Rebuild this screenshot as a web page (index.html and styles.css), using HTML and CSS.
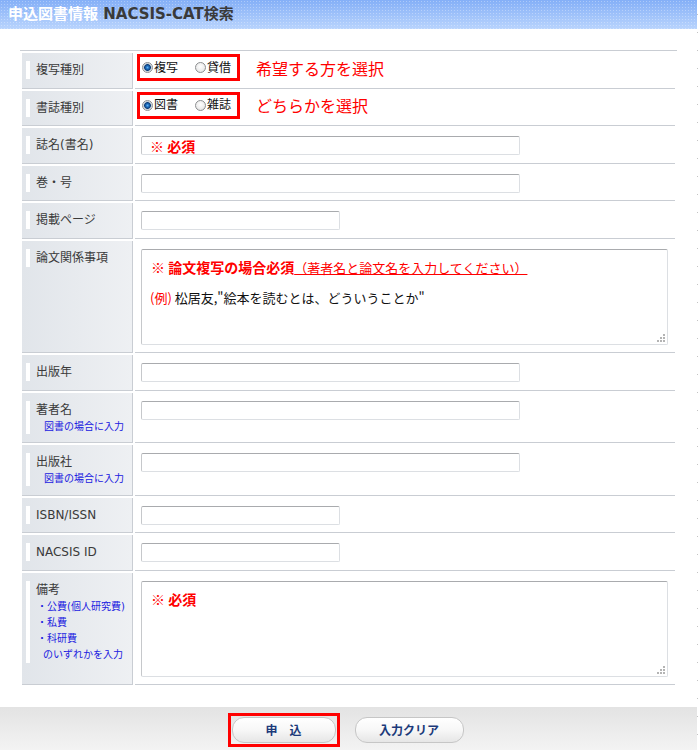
FILE: index.html
```html
<!DOCTYPE html>
<html lang="ja">

<head>
	<meta charset="utf-8">
	<title>
		申込図書情報 NACSIS-CAT検索
	</title>

	<link rel="stylesheet" href="styles.css">

</head>

<body>
	<div class="page">
		<h1 class="head"><span class="head-main">申込図書情報</span> NACSIS-CAT検索</h1>

		<table class="form">
			<tr>
				<th><div class="label">複写種別</div></th>
				<td class="choice">
					<div class="choice-row">
						<span class="mark">
							<label><input class="radio" type="radio" name="copy" checked>複写</label>
							<label><input class="radio" type="radio" name="copy">貸借</label>
						</span>
						<span class="pick">希望する方を選択</span>
					</div>
				</td>
			</tr>
			<tr>
				<th><div class="label">書誌種別</div></th>
				<td class="choice">
					<div class="choice-row">
						<span class="mark">
							<label><input class="radio" type="radio" name="kind" checked>図書</label>
							<label><input class="radio" type="radio" name="kind">雑誌</label>
						</span>
						<span class="pick">どちらかを選択</span>
					</div>
				</td>
			</tr>
			<tr>
				<th><div class="label">誌名(書名)</div></th>
				<td><input class="text" type="text" placeholder="※ 必須"></td>
			</tr>
			<tr>
				<th><div class="label">巻・号</div></th>
				<td><input class="text" type="text"></td>
			</tr>
			<tr>
				<th><div class="label">掲載ページ</div></th>
				<td><input class="text short" type="text"></td>
			</tr>
			<tr class="tall">
				<th><div class="label">論文関係事項</div></th>
				<td>
					<div class="area">
						<div class="req">※ 論文複写の場合必須<span class="req-sub">（著者名と論文名を入力してください）</span></div>
						<div class="sample"><span class="sample-tag">(例)</span> 松居友,"絵本を読むとは、どういうことか"</div>
						<svg class="grip" width="8" height="8" viewBox="0 0 8 8">
							<rect x="6" y="0" width="2" height="2" fill="#b4b4b4"/>
							<rect x="3" y="3" width="2" height="2" fill="#b4b4b4"/>
							<rect x="6" y="3" width="2" height="2" fill="#b4b4b4"/>
							<rect x="0" y="6" width="2" height="2" fill="#b4b4b4"/>
							<rect x="3" y="6" width="2" height="2" fill="#b4b4b4"/>
							<rect x="6" y="6" width="2" height="2" fill="#b4b4b4"/>
						</svg>
					</div>
				</td>
			</tr>
			<tr>
				<th><div class="label">出版年</div></th>
				<td><input class="text" type="text"></td>
			</tr>
			<tr class="mid">
				<th><div class="label">著者名<div class="hint">図書の場合に入力</div></div></th>
				<td><input class="text" type="text"></td>
			</tr>
			<tr class="mid">
				<th><div class="label">出版社<div class="hint">図書の場合に入力</div></div></th>
				<td><input class="text" type="text"></td>
			</tr>
			<tr>
				<th><div class="label">ISBN/ISSN</div></th>
				<td><input class="text short" type="text"></td>
			</tr>
			<tr>
				<th><div class="label">NACSIS ID</div></th>
				<td><input class="text short" type="text"></td>
			</tr>
			<tr class="tall">
				<th>
					<div class="label">備考
						<ul class="fund">
							<li>・公費(個人研究費)</li>
							<li>・私費</li>
							<li>・科研費</li>
							<li class="fund-tail">のいずれかを入力</li>
						</ul>
					</div>
				</th>
				<td>
					<div class="area">
						<div class="req">※ 必須</div>
						<svg class="grip" width="8" height="8" viewBox="0 0 8 8">
							<rect x="6" y="0" width="2" height="2" fill="#b4b4b4"/>
							<rect x="3" y="3" width="2" height="2" fill="#b4b4b4"/>
							<rect x="6" y="3" width="2" height="2" fill="#b4b4b4"/>
							<rect x="0" y="6" width="2" height="2" fill="#b4b4b4"/>
							<rect x="3" y="6" width="2" height="2" fill="#b4b4b4"/>
							<rect x="6" y="6" width="2" height="2" fill="#b4b4b4"/>
						</svg>
					</div>
				</td>
			</tr>
		</table>

		<div class="foot">
			<span class="mark btn-mark"><button class="btn">申　込</button></span>
			<button class="btn wide">入力クリア</button>
		</div>
	</div>
</body>

</html>
```

FILE: styles.css
```css
body {
	margin: 0;
	font-family: "DejaVu Sans", "Noto Sans CJK JP", sans-serif;
	font-size: 12px;
	color: #333;
	background: #fff;
}

.page {
	width: 698px;
	min-height: 750px;
	background-image: linear-gradient(#c4c4c4 0 1px, transparent 1px);
	background-size: 1px 18px;
	background-position: 697px 14px;
	background-repeat: repeat-y;
}

.head {
	margin: 0;
	width: 697px;
	height: 29px;
	box-sizing: border-box;
	padding-left: 8px;
	line-height: 29px;
	font-size: 15px;
	font-weight: bold;
	color: #3a3a3a;
	background:
		radial-gradient(circle, rgba(255, 255, 255, 0.3) 0.7px, transparent 1px) 0 0 / 3px 3px,
		linear-gradient(#84aff7, #b9d4fd);
}

.head-main {
	color: #fff;
}

/* form table */

.form {
	margin: 21px 0 0 20px;
	width: 657px;
	table-layout: fixed;
	border-top: 1px solid #c9cdd3;
	border-spacing: 2px;
}

.form tr {
	height: 35.5px;
}

.form tr.mid {
	height: 50.5px;
}

.form tr.tall {
	height: 112.5px;
}

.form th {
	width: 111px;
	box-sizing: border-box;
	padding: 8px 0 0 4px;
	vertical-align: top;
	text-align: left;
	font-weight: normal;
	background: linear-gradient(to right, #e1e5ea, #eef0f3);
	border-right: 1px solid #c9cdd3;
	border-bottom: 1px solid #c9cdd3;
}

.form td {
	padding: 8px 0 0 6px;
	vertical-align: top;
	border-bottom: 1px solid #c9cdd3;
}

.form td.choice {
	padding: 1px 0 0 2px;
}

.label {
	border-left: 4px solid #fff;
	padding-left: 6px;
	line-height: 18px;
	color: #3a3a3a;
}

.hint {
	margin-left: 8px;
	font-size: 10px;
	line-height: 15px;
	color: #2020e0;
}

.fund {
	margin: 0;
	padding: 0 0 0 1px;
	list-style: none;
	font-size: 10px;
	line-height: 16px;
	color: #2020e0;
}

.fund-tail {
	padding-left: 6px;
}

/* radio choices */

.choice-row {
	display: flex;
	align-items: center;
}

.mark {
	display: inline-flex;
	align-items: center;
	box-sizing: border-box;
	height: 27px;
	padding: 0 6px 0 2px;
	border: 3px solid #f00;
	color: #111;
}

.mark label {
	display: flex;
	align-items: center;
	line-height: 18px;
}

.mark label + label {
	margin-left: 17px;
}

.radio {
	appearance: none;
	-webkit-appearance: none;
	box-sizing: border-box;
	width: 11px;
	height: 11px;
	margin: 0 1px 0 0;
	border: 1px solid #8d8f91;
	border-radius: 50%;
	background: radial-gradient(circle at 50% 40%, #fff 0, #ececec 60%, #d2d2d2 100%);
}

.radio:checked {
	background: radial-gradient(circle, #5cb0f0 0, #1f6fc0 1.5px, #0c3d78 3px, #a8b8c8 3.6px, #f4f4f4 4.6px, #dcdcdc 100%);
}

.pick {
	margin-left: 16px;
	font-family: "Noto Sans CJK JP", sans-serif;
	font-size: 16px;
	line-height: 20px;
	color: #f00;
}

/* inputs */

.text {
	display: block;
	box-sizing: border-box;
	width: 379px;
	height: 19px;
	margin: 0;
	padding: 0 8px;
	border: 1px solid #dcdfe3;
	border-top-color: #a9abae;
	border-left-color: #c6c8cb;
	border-radius: 2px;
	font-family: "Noto Sans CJK JP", sans-serif;
	font-size: 14px;
	background: #fff;
}

.text.short {
	width: 199px;
}

.text::placeholder {
	color: #f00;
	font-weight: bold;
	opacity: 1;
}

.area {
	display: flex;
	flex-direction: column;
	box-sizing: border-box;
	width: 527px;
	height: 96px;
	padding: 8px 2px 2px 9px;
	border: 1px solid #dcdfe3;
	border-top-color: #a9abae;
	border-left-color: #c6c8cb;
	border-radius: 2px;
	font-family: "Noto Sans CJK JP", sans-serif;
	background: #fff;
}

.req {
	font-size: 14px;
	font-weight: bold;
	line-height: 18px;
	color: #f00;
}

.req-sub {
	font-size: 13px;
	font-weight: normal;
	text-decoration: underline;
}

.sample {
	margin-top: 11px;
	margin-left: -1px;
	font-size: 13px;
	line-height: 20px;
	color: #111;
}

.sample-tag {
	color: #f00;
}

.grip {
	margin-top: auto;
	align-self: flex-end;
}

/* footer buttons */

.foot {
	display: flex;
	justify-content: center;
	align-items: center;
	gap: 15px;
	box-sizing: border-box;
	width: 697px;
	height: 43px;
	margin-top: 20px;
	padding: 2px 6px 0 0;
	background: linear-gradient(#e3e3e3, #f3f3f3);
}

.btn-mark {
	height: auto;
	padding: 1px;
}

.btn {
	box-sizing: border-box;
	width: 104px;
	height: 26px;
	padding: 0;
	border: 1px solid #c6c6c6;
	border-radius: 12px;
	background: linear-gradient(#fff, #f7f7f7 50%, #e6e6e6);
	font-family: "Noto Sans CJK JP", sans-serif;
	font-size: 12px;
	font-weight: bold;
	color: #1c3a7a;
}

.btn.wide {
	width: 109px;
}
```
